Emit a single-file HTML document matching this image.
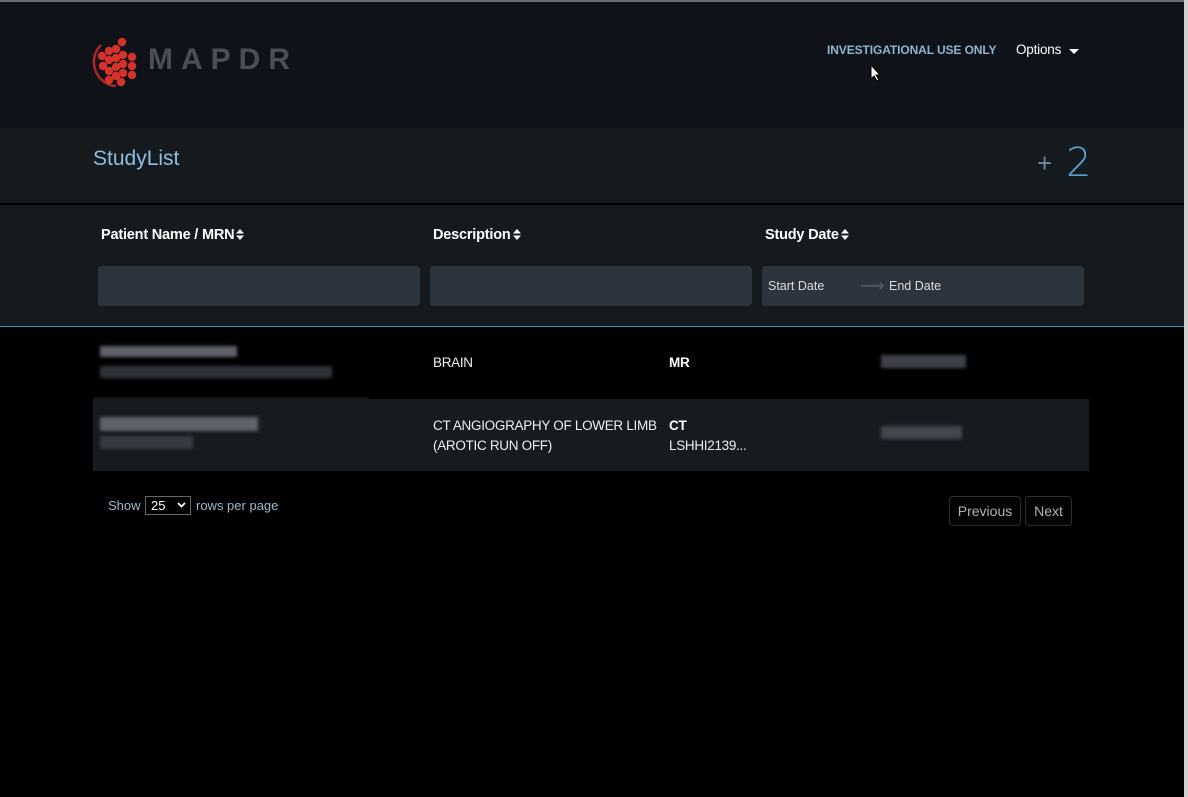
<!DOCTYPE html>
<html><head><style>
*{margin:0;padding:0;box-sizing:border-box}
body{width:1188px;height:797px;background:#000;font-family:"Liberation Sans",Arial,sans-serif;position:relative;overflow:hidden;color:#fff}
.abs{position:absolute;white-space:nowrap}
.topl{left:0;top:0;width:1188px;height:2px;background:#6a6d70}
.rbar{left:1184px;top:0;width:4px;height:797px;background:#d0d0d0}
.hdr{left:0;top:2px;width:1184px;height:126px;background:#0f1218}
.band{left:0;top:128px;width:1184px;height:75px;background:#151a1f}
.sep{left:0;top:203px;width:1184px;height:2px;background:#000}
.filt{left:0;top:205px;width:1184px;height:121px;background:#151a1f}
.bl{left:0;top:326px;width:1184px;height:1px;background:#3f8fbf}
.th{font-size:14.5px;font-weight:bold;color:#fff;top:227px;letter-spacing:-0.2px}
.srt{display:inline-block;vertical-align:middle;margin-left:2px;margin-top:-2px}
.inp{top:266px;height:40px;background:#2c343d;border-radius:4px}
.blur{filter:blur(1.5px)}
.t{font-size:13.5px;color:#eee;letter-spacing:-0.3px}
.btn{top:496px;height:30px;border:1px solid #2a2d31;border-radius:4px;color:#aeb3b8;font-size:14px;line-height:28px;text-align:center;background:#030303}
</style></head><body>
<div class="abs topl"></div>
<div class="abs hdr"></div>
<svg class="abs" style="left:92px;top:36px" width="50" height="52" viewBox="0 0 50 52">
<path d="M9 9 A24 24 0 0 0 24 50" stroke="#b0242a" stroke-width="2.5" fill="none"/>
<g fill="#d6322c">
<circle cx="30" cy="6" r="4.2"/><circle cx="24" cy="13" r="4.2"/><circle cx="17" cy="15" r="4.2"/><circle cx="10" cy="20" r="4.2"/>
<circle cx="31" cy="19" r="4.2"/><circle cx="24" cy="22" r="4.2"/><circle cx="17" cy="24" r="4.2"/><circle cx="40" cy="21" r="4.2"/>
<circle cx="11" cy="30" r="4.2"/><circle cx="31" cy="28" r="4.2"/><circle cx="40" cy="30" r="4.2"/><circle cx="24" cy="31" r="4.2"/>
<circle cx="17" cy="35" r="4.2"/><circle cx="31" cy="37" r="4.2"/><circle cx="40" cy="39" r="4.2"/><circle cx="24" cy="40" r="4.2"/>
<circle cx="17" cy="44" r="4.2"/><circle cx="29" cy="46" r="4.2"/>
</g></svg>
<div class="abs" style="left:148px;top:43px;font-size:30px;font-weight:bold;color:#4a4f57;letter-spacing:8px">MAPDR</div>
<div class="abs" style="left:827px;top:43px;font-size:12px;font-weight:bold;color:#90b5cf;letter-spacing:-0.1px">INVESTIGATIONAL USE ONLY</div>
<div class="abs" style="left:1016px;top:42px;font-size:13.5px;color:#fff;letter-spacing:-0.2px">Options</div>
<div class="abs" style="left:1069px;top:49px;width:0;height:0;border-left:5px solid transparent;border-right:5px solid transparent;border-top:5px solid #fff"></div>
<svg class="abs" style="left:870px;top:64px" width="12" height="18"><path d="M1 1 L1 15 L4 12 L7 17 L9 16 L6 11 L10 11 Z" fill="#fff" stroke="#000" stroke-width="1"/></svg>
<div class="abs band"></div>
<div class="abs" style="left:93px;top:147px;font-size:21px;color:#8fbedf">StudyList</div>
<div class="abs" style="left:1037px;top:148px;font-size:26px;color:#6f8aa0;font-weight:200">+</div>
<div class="abs" style="left:1066px;top:140px;font-size:40px;color:#5aa0d0;font-weight:100;font-family:'DejaVu Sans',sans-serif">2</div>
<div class="abs sep"></div>
<div class="abs filt"></div>
<div class="abs th" style="left:101px">Patient Name / MRN<svg class="srt" width="8" height="11"><path d="M0 4.5L4 0L8 4.5Z M0 6.5L4 11L8 6.5Z" fill="#fff"/></svg></div>
<div class="abs th" style="left:433px">Description<svg class="srt" width="8" height="11"><path d="M0 4.5L4 0L8 4.5Z M0 6.5L4 11L8 6.5Z" fill="#fff"/></svg></div>
<div class="abs th" style="left:765px">Study Date<svg class="srt" width="8" height="11"><path d="M0 4.5L4 0L8 4.5Z M0 6.5L4 11L8 6.5Z" fill="#fff"/></svg></div>
<div class="abs inp" style="left:98px;width:322px"></div>
<div class="abs inp" style="left:430px;width:322px"></div>
<div class="abs inp" style="left:762px;width:322px"></div>
<div class="abs" style="left:768px;top:279px;font-size:12.5px;color:#ddd">Start Date</div>
<div class="abs" style="left:860px;top:276px;font-size:17px;color:#555c64">⟶</div>
<div class="abs" style="left:889px;top:279px;font-size:12.5px;color:#ddd">End Date</div>
<div class="abs bl"></div>
<!-- row 1 -->
<div class="abs blur" style="left:100px;top:346px;width:137px;height:11px;background:#5e6068"></div>
<div class="abs blur" style="left:100px;top:366px;width:232px;height:12px;background:#2e3238"></div>
<div class="abs" style="left:93px;top:397px;width:276px;height:2px;background:#111"></div>
<div class="abs t" style="left:433px;top:355px">BRAIN</div>
<div class="abs t" style="left:669px;top:355px;font-weight:bold;color:#fff">MR</div>
<div class="abs blur" style="left:881px;top:355px;width:85px;height:13px;background:#3e4148"></div>
<!-- row 2 -->
<div class="abs" style="left:93px;top:399px;width:996px;height:72px;background:#171b20"></div>
<div class="abs blur" style="left:100px;top:417px;width:158px;height:14px;background:#60626a"></div>
<div class="abs blur" style="left:100px;top:436px;width:93px;height:13px;background:#363a41"></div>
<div class="abs t" style="left:433px;top:416px;line-height:20px">CT ANGIOGRAPHY OF LOWER LIMB<br>(AROTIC RUN OFF)</div>
<div class="abs t" style="left:669px;top:416px;line-height:20px"><b style="color:#fff">CT</b><br>LSHHI2139...</div>
<div class="abs blur" style="left:881px;top:426px;width:81px;height:13px;background:#43464d"></div>
<!-- pagination -->
<div class="abs" style="left:108px;top:498px;font-size:13px;color:#9bb8cc">Show</div>
<div class="abs" style="left:145px;top:496px;width:46px;height:19px;border:1px solid #666;font-size:13px;color:#fff;padding-left:5px;line-height:17px">25
<svg style="position:absolute;left:31px;top:5px" width="9" height="6"><path d="M1 1L4.5 4.5L8 1" stroke="#fff" stroke-width="1.8" fill="none"/></svg></div>
<div class="abs" style="left:196px;top:498px;font-size:13px;color:#9bb8cc">rows per page</div>
<div class="abs btn" style="left:949px;width:72px">Previous</div>
<div class="abs btn" style="left:1025px;width:47px">Next</div>
<div class="abs rbar"></div>
</body></html>
